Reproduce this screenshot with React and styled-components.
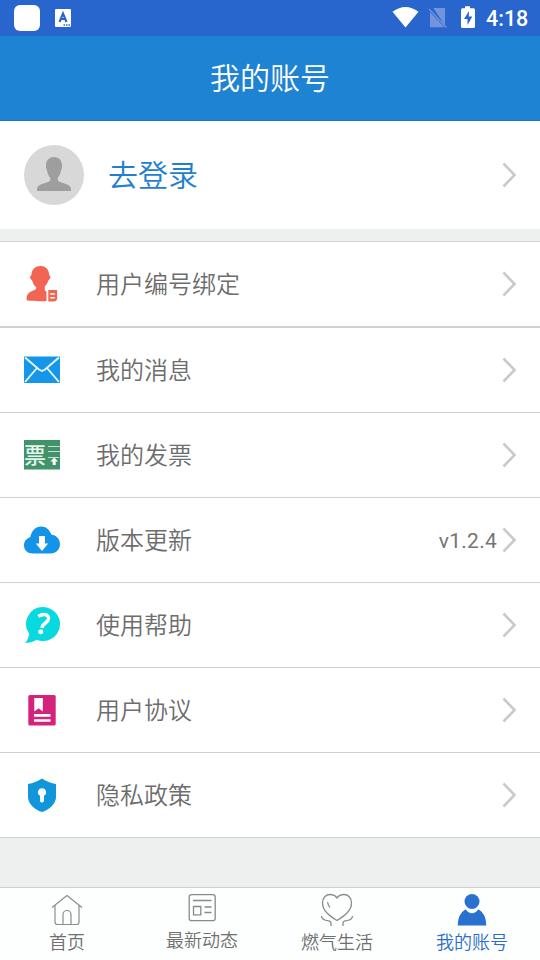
import React from "react";
import styled, { createGlobalStyle } from "styled-components";

const Global = createGlobalStyle`
  * { box-sizing: border-box; }
  body { margin: 0; background: #eef0f0; font-family: Roboto, "Noto Sans CJK SC", sans-serif; }
`;
const Screen = styled.div`
  display: flex;
  flex-direction: column;
  width: 540px;
  height: 960px;
  background: #eef0f0;
  overflow: hidden;
`;
const StatusBar = styled.div`
  display: flex;
  justify-content: space-between;
  height: 36px;
  background: #2866cd;
`;
const StatusTime = styled.span`
  width: 54px;
  padding-top: 1px;
  color: #fff;
  font-size: 21.5px;
  font-weight: 500;
  line-height: 36px;
  white-space: nowrap;
`;
const StatusRight = styled.div`
  display: flex;
`;
const Header = styled.header`
  display: flex;
  align-items: center;
  justify-content: center;
  height: 85px;
  padding-top: 2px;
  border-bottom: 1px solid #2273b5;
  background: #1f83d4;
`;
const Title = styled.h1`
  margin: 0;
  color: #fff;
  font-size: 30px;
  font-weight: 350;
  line-height: 40px;
`;
const Profile = styled.section`
  display: flex;
  align-items: center;
  height: 108px;
  padding: 0 22px 0 24px;
  background: #fff;
`;
const LoginText = styled.span`
  flex: 1;
  margin-left: 24px;
  padding-top: 2px;
  color: #1f80d0;
  font-size: 30px;
  font-weight: 350;
  line-height: 40px;
`;
const List = styled.section`
  margin-top: 12px;
  border-top: 1px solid #d2d4d4;
`;
const Row = styled.div`
  display: flex;
  align-items: center;
  height: ${(p) => (p.$thick ? 86 : 85)}px;
  padding: 0 22px 0 22px;
  border-bottom: ${(p) => (p.$thick ? 2 : 1)}px solid #d0d0d0;
  background: #fff;
`;
const Label = styled.span`
  flex: 1;
  margin-left: 34px;
  padding-top: 2px;
  color: #6d6d6d;
  font-size: 24px;
  font-weight: 350;
  line-height: 34px;
`;
const Version = styled.span`
  margin-right: 3px;
  padding-top: 2px;
  color: #757575;
  font-size: 21px;
  letter-spacing: 0.25px;
  line-height: 30px;
`;
const Nav = styled.nav`
  display: grid;
  grid-template-columns: repeat(4, 1fr);
  height: 73px;
  margin-top: auto;
  border-top: 1px solid #d0d2d2;
  background: #fdfefe;
`;
const NavItem = styled.div`
  display: flex;
  flex-direction: column;
  align-items: center;
  padding-top: ${(p) => (p.$raised ? 0 : 2)}px;
  padding-right: 1px;
  color: ${(p) => (p.$active ? "#2a6dcc" : "#6f6f6f")};
  font-size: 18px;
  font-weight: 350;
  line-height: 26px;
`;
const Icon = styled.svg`
  display: block;
  flex: none;
`;

const Chevron = () => (
  <Icon width="18" height="30" viewBox="0 0 18 30" fill="none" stroke="#cacaca" strokeWidth="2.600">
    <path d="M3.500 3.500 14.500 15 3.500 26.500" />
  </Icon>
);

const BindIcon = () => (
  <Icon width="40" height="40" viewBox="0 0 40 40" fill="#f26553">
    <path d="M18.500 2c4.800 0 8.600 3.200 8.600 8.400 0 .8.600 1.100 1.200 1.800.7.800-.5 3-2.100 4.600-.8 2.800-2.200 4.700-3.400 5.500v4.200l1.700 1V37c-6 .4-13.500.2-18.900-.4-1.400 0-1.300-3.600-.2-5.900 1.300-2.600 4.700-3.500 7.200-4.700 1.200-.6 1.800-1.200 1.600-2.700-2-1.600-3.200-3.700-4.100-6.700-1.500-1.500-2.600-3.600-1.800-4.400.6-.7 1.200-1 1.200-1.800C9.700 5.200 13.700 2 18.500 2z" />
    <path d="M26.300 26h8.800v8c0 2.400-1.300 3.600-3.800 3.600h-5z" />
    <path d="M28.300 29.300h4.500v1.500h-4.500zM28.300 33h4.500v1.500h-4.500z" fill="#fff" />
  </Icon>
);
const MailIcon = () => (
  <Icon width="40" height="40" viewBox="0 0 40 40">
    <path d="M2 6.500h36V33H2z" fill="#1497e8" />
    <path d="m3 7.500 14 12 3 1.500 3-1.500 14-12M3 32l12-14M37 32 25 18" fill="none" stroke="#e9f7ff" strokeWidth="1.900" />
  </Icon>
);
const InvoiceGlyph = styled.text`
  fill: #e4f5ea;
  font-family: "Noto Sans CJK SC", sans-serif;
  font-size: 22px;
  font-weight: 500;
`;
const InvoiceIcon = () => (
  <Icon width="40" height="40" viewBox="0 0 40 40">
    <path d="M2 5h36v29.500H2z" fill="#40936a" />
    <InvoiceGlyph x="2" y="28">票</InvoiceGlyph>
    <path d="M26 11.500h12M26 16.500h12M26 22.500h11" stroke="#c3dfcf" strokeWidth="1.200" />
    <path d="M32.200 22.500 36 26.500h-2.300V30h-3v-3.500h-2.300z" fill="#fff" />
  </Icon>
);
const CloudIcon = () => (
  <Icon width="40" height="40" viewBox="0 0 40 40">
    <path d="M11 33.500C5.500 33.500 2 30 2 25.500c0-4.500 2.500-7.200 6.200-8.300C9.500 11 13.500 6.500 19 6.500c5.200 0 8.500 3 10.300 8 5 .8 8.700 4.500 8.700 9.500 0 5.500-4 9.500-9.500 9.500z" fill="#1494e8" />
    <path d="M17 16h6v7.500h3.200L20 31l-6.200-7.500H17z" fill="#fff" />
  </Icon>
);
const HelpIcon = () => (
  <Icon width="40" height="40" viewBox="0 0 40 40">
    <path d="M21 2a17 17 0 1 1-6.500 32.700C11 36.800 7 38 3 38c2.300-2.200 3.500-5.500 4.300-9A17 17 0 0 1 21 2z" fill="#08d9df" />
    <path d="M16.200 11.300q5-2.900 8.200-1.300c3.300 1.700 2.400 5.500-.4 7.500-2.600 1.800-3.800 3-4.300 5.300" fill="none" stroke="#fff" strokeWidth="3.400" />
    <circle cx="18.700" cy="26.800" r="2.500" fill="#fff" />
  </Icon>
);
const BookIcon = () => (
  <Icon width="40" height="40" viewBox="0 0 40 40">
    <rect x="6.300" y="5" width="27.400" height="30.500" rx="1.500" fill="#d4237a" />
    <path d="M12.300 8h8.500v13.500l-4.200-3.200-4.300 3.200zM12 24h16.500v2.700H12zM12 29.200h16.500v2.600H12z" fill="#fff" />
  </Icon>
);
const ShieldIcon = () => (
  <Icon width="40" height="40" viewBox="0 0 40 40">
    <path d="M20 3.500c4.500 2.800 9 5 14 5.600V22c0 7.400-8 13.400-14 15-6-1.600-14-7.600-14-15V9.100c5-.6 9.500-2.800 14-5.600z" fill="#1296db" />
    <path d="M20 13.200a4 4 0 0 1 2 7.500V25a2 2 0 0 1-4 1v-5.300a4 4 0 0 1 2-7.500z" fill="#f5fbff" />
  </Icon>
);

const rows = [
  ["用户编号绑定", BindIcon],
  ["我的消息", MailIcon],
  ["我的发票", InvoiceIcon],
  ["版本更新", CloudIcon, "v1.2.4"],
  ["使用帮助", HelpIcon],
  ["用户协议", BookIcon],
  ["隐私政策", ShieldIcon],
];

const HomeIcon = () => (
  <Icon width="40" height="40" viewBox="0 0 40 40" fill="none" stroke="#8c8c8c" strokeWidth="1.200">
    <path d="M5 17.500 20 5.500l15 12M8 15.500V32q0 2.500 2.500 2.500h19q2.500 0 2.500-2.500V15.500M16 34.500V24.500a4 4 0 0 1 8 0v10" />
  </Icon>
);
const NewsIcon = () => (
  <Icon width="40" height="40" viewBox="0 0 40 40" fill="none" stroke="#8a8a8a" strokeWidth="1.300">
    <rect x="7.200" y="6.700" width="26" height="26" rx="2.500" />
    <path d="M11 12.500h18.500M11.500 18.500h7.300v8.300h-7.300zM22.500 19h7M22.500 24.500h7" />
  </Icon>
);
const HeartIcon = () => (
  <Icon width="40" height="40" viewBox="0 0 40 40" fill="none" stroke="#8c8c8c" strokeWidth="1.300">
    <path d="M20 30.500C12 25.500 5.500 20.500 5.500 13 5.500 7.500 9 4.500 13 4.500c3.300 0 5.500 1.400 7 3.500 1.500-2.100 3.700-3.500 7-3.500 4 0 7.500 3 7.500 8.500 0 7.500-6.500 12.500-14.500 17.500zM10.500 12q.5 3 2.500 5.500M4.500 26c0 4 3.500 4.500 7 4.800q2.500.2 2.500 2.700V36M35.500 26c0 4-3.500 4.500-7 4.800q-2.500.2-2.500 2.700V36" />
  </Icon>
);
const AccountIcon = () => (
  <Icon width="40" height="40" viewBox="0 0 40 40" fill="#2a70ce">
    <circle cx="20" cy="11.500" r="7.500" />
    <path d="M5.700 35.500q0-11.500 7.800-16.300c4 5.300 9 5.300 13 0q7.800 4.800 7.800 16.300z" />
  </Icon>
);

export default function App() {
  return (
    <>
      <Global />
      <Screen>
        <StatusBar>
          <Icon width="90" height="36" viewBox="0 0 90 36">
            <rect x="14" y="5" width="26" height="26" rx="6" fill="#fff" />
            <rect x="55" y="9" width="16" height="18" rx="1" fill="#fff" />
            <path d="m59.500 22 3.500-8.500L66.500 22M60.500 19h5" fill="none" stroke="#2866cd" strokeWidth="2.100" />
            <path d="M63.500 25h1.500M66 25h1.500M68.500 25H70" stroke="#2866cd" strokeWidth="1.300" />
          </Icon>
          <StatusRight>
            <Icon width="94" height="36" viewBox="392 0 94 36">
              <path d="M392.500 11.800q13-9.400 26 0L405.500 27.500z" fill="#fff" />
              <path d="M433.300 8H445v17.500zM430 12l14.500 15.300H430z" fill="#7194dd" />
              <path d="m429 9 17.500 18.500" stroke="#7194dd" strokeWidth="1.300" />
              <path d="M465 6.200h5v2h3.500q1.500 0 1.500 1.500V26.500q0 1.500-1.500 1.500h-11q-1.500 0-1.500-1.500V9.700q0-1.500 1.500-1.500h2.500z" fill="#fff" />
              <path d="m469 11-5 8h3.500v6l4.800-8.500h-3.500z" fill="#2866cd" />
            </Icon>
            <StatusTime>4:18</StatusTime>
          </StatusRight>
        </StatusBar>
        <Header>
          <Title>我的账号</Title>
        </Header>
        <Profile>
          <Icon width="60" height="60" viewBox="0 0 60 60">
            <circle cx="30" cy="30" r="30" fill="#d8d8d8" />
            <path d="M30 12c5.300 0 8 3.500 8 8.800 0 1.500-.1 2.500-.8 4-.9 4.200-1.800 6.200-3.400 7.900-.6 3 .6 3.800 3.500 4.700 5.200 1.600 9.700 2.800 9.700 6.800V46H13v-1.800c0-4 4.500-5.200 9.700-6.800 2.900-.9 4.100-1.700 3.500-4.700-1.600-1.700-2.500-3.700-3.400-7.900-.7-1.500-.8-2.500-.8-4 0-5.300 2.700-8.800 8-8.800z" fill="#9e9e9e" />
          </Icon>
          <LoginText>去登录</LoginText>
          <Chevron />
        </Profile>
        <List>
          {rows.map(([label, Glyph, version], i) => (
            <Row key={label} $thick={i === 0}>
              <Glyph />
              <Label>{label}</Label>
              {version && <Version>{version}</Version>}
              <Chevron />
            </Row>
          ))}
        </List>
        <Nav>
          <NavItem><HomeIcon />首页</NavItem>
          <NavItem $raised><NewsIcon />最新动态</NavItem>
          <NavItem><HeartIcon />燃气生活</NavItem>
          <NavItem $active><AccountIcon />我的账号</NavItem>
        </Nav>
      </Screen>
    </>
  );
}
